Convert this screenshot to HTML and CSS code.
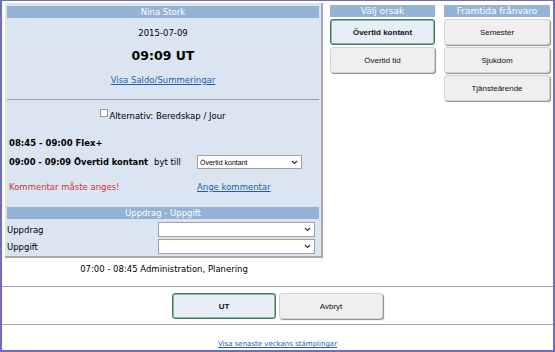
FILE: index.html
```html
<!DOCTYPE html>
<html lang="sv">
<head>
    <meta charset="UTF-8">
    <title>Stämpling</title>
    <link rel="stylesheet" href="styles.css">
</head>
<body>
    <div class="page">
        <div class="top">
            <div class="panel">
                <div class="bar">Nina Stork</div>
                <div class="date">2015-07-09</div>
                <div class="time">09:09 UT</div>
                <div class="saldo"><a href="#">Visa Saldo/Summeringar</a></div>
                <div class="divider"></div>
                <div class="alt"><input type="checkbox" class="check">Alternativ: Beredskap / Jour</div>
                <div class="period">08:45 - 09:00 Flex+</div>
                <div class="swap">
                    <span class="period-text">09:00 - 09:09 Övertid kontant</span>
                    <span>byt till</span>
                    <span class="select-wrap">
                        <select class="pick"><option>Övertid kontant</option></select>
                        <svg class="arrow" width="7" height="5" viewBox="0 0 7 5"><path d="M1 1l2.5 2.5L6 1" fill="none" stroke="#333" stroke-width="1.1"/></svg>
                    </span>
                </div>
                <div class="swap comment">
                    <span class="warn">Kommentar måste anges!</span>
                    <span></span>
                    <a href="#">Ange kommentar</a>
                </div>
                <div class="bar sub">Uppdrag - Uppgift</div>
                <div class="field">
                    <label>Uppdrag</label>
                    <span class="select-wrap">
                        <select class="pick wide"><option></option></select>
                        <svg class="arrow" width="7" height="5" viewBox="0 0 7 5"><path d="M1 1l2.5 2.5L6 1" fill="none" stroke="#333" stroke-width="1.1"/></svg>
                    </span>
                </div>
                <div class="field">
                    <label>Uppgift</label>
                    <span class="select-wrap">
                        <select class="pick wide"><option></option></select>
                        <svg class="arrow" width="7" height="5" viewBox="0 0 7 5"><path d="M1 1l2.5 2.5L6 1" fill="none" stroke="#333" stroke-width="1.1"/></svg>
                    </span>
                </div>
            </div>

            <!-- Reasons -->
            <div class="column reasons">
                <div class="col-head">Välj orsak</div>
                <button class="btn selected">Övertid kontant</button>
                <button class="btn">Övertid tid</button>
            </div>

            <!-- Future absence -->
            <div class="column future">
                <div class="col-head">Framtida frånvaro</div>
                <button class="btn">Semester</button>
                <button class="btn">Sjukdom</button>
                <button class="btn">Tjänsteärende</button>
            </div>
        </div>

        <div class="summary">07:00 - 08:45 Administration, Planering</div>
        <div class="rule"></div>
        <div class="actions">
            <button class="btn big selected">UT</button>
            <button class="btn big">Avbryt</button>
        </div>
        <div class="rule second"></div>
        <div class="footer"><a href="#">Visa senaste veckans stämplingar</a></div>
    </div>
</body>
</html>
```

FILE: styles.css
```css
body {
    margin: 0;
    font-family: "DejaVu Sans", Verdana, sans-serif;
    font-size: 8.5px;
    color: #000;
    background-color: #fff;
}

a {
    color: #1f5db3;
    text-decoration: underline;
}

.page {
    box-sizing: border-box;
    width: 555px;
    height: 352px;
    border: 2px solid #6d6dc8;
    border-top-width: 1px;
    display: flex;
    flex-direction: column;
}

/* Top area */
.top {
    display: flex;
    align-items: flex-start;
    padding: 2px 0 0 3px;
}

.panel {
    width: 312px;
    padding: 3px 2px 2px;
    background-color: #dbe5f1;
    border-right: 2px solid #a9a9a9;
    border-bottom: 2px solid #a9a9a9;
}

.bar,
.col-head {
    height: 12px;
    line-height: 12px;
    background-color: #95b3d7;
    color: #fff;
    text-align: center;
}

.date {
    margin-top: 9px;
    line-height: 12px;
    text-align: center;
}

.time {
    margin-top: 9px;
    line-height: 16px;
    font-size: 12.5px;
    font-weight: bold;
    text-align: center;
}

.saldo {
    margin-top: 10px;
    line-height: 12px;
    text-align: center;
}

.divider {
    margin-top: 13px;
    border-top: 1px solid #9c9c9c;
}

.alt {
    margin-top: 9px;
    height: 12px;
    line-height: 12px;
    text-align: center;
}

.check {
    appearance: none;
    box-sizing: border-box;
    width: 8px;
    height: 8px;
    margin: 0 1px 0 0;
    border: 1px solid #999;
    background-color: #fff;
    vertical-align: 2px;
}

.period {
    margin-top: 16px;
    padding-left: 2px;
    line-height: 12px;
    font-weight: bold;
}

.swap {
    margin-top: 5px;
    padding-left: 2px;
    height: 16px;
    display: grid;
    grid-template-columns: 145px 43px 105px;
    align-items: center;
}

.period-text {
    font-weight: bold;
    font-size: 8.3px;
}

.comment {
    margin-top: 11px;
    height: 12px;
}

.warn {
    color: #cc3535;
}

/* Select boxes */
.select-wrap {
    position: relative;
    display: block;
    height: 14px;
}

.pick {
    appearance: none;
    box-sizing: border-box;
    display: block;
    width: 105px;
    height: 14px;
    margin: 0;
    padding: 0 2px;
    font-family: "Liberation Sans", Arial, sans-serif;
    font-size: 7px;
    color: #000;
    background-color: #fff;
    border: 1px solid #a0a0a0;
    border-radius: 0;
}

.arrow {
    position: absolute;
    right: 4px;
    top: 5px;
}

.bar.sub {
    margin-top: 14px;
}

.field {
    margin-top: 3px;
    height: 15px;
    display: grid;
    grid-template-columns: 151px 157px;
    align-items: center;
}

.field + .field {
    margin-top: 2px;
}

.field .select-wrap {
    height: 15px;
}

.pick.wide {
    width: 157px;
    height: 15px;
}

/* Right columns */
.column {
    margin-top: 2px;
    display: flex;
    flex-direction: column;
}

.reasons {
    width: 105px;
    margin-left: 7px;
}

.future {
    width: 106px;
    margin-left: 9px;
}

.col-head {
    font-size: 9px;
}

.btn {
    box-sizing: border-box;
    height: 26px;
    margin-top: 2px;
    padding: 0;
    font-family: "Liberation Sans", Arial, sans-serif;
    font-size: 8px;
    color: #111;
    background-color: #efefef;
    border: 1px solid #d2d2d2;
    border-radius: 3px;
    box-shadow: 1px 1px 1px #8d8d8d;
}

.btn.selected {
    font-weight: bold;
    background-color: #e7eef8;
    border: 1px solid #3c7b5d;
    box-shadow: inset 0 0 0 0.5px #3c7b5d;
}

/* Bottom area */
.summary {
    width: 318px;
    margin: 5px 0 0 3px;
    line-height: 12px;
    text-align: center;
}

.rule {
    margin-top: 11px;
    border-top: 1px solid #a3a3a3;
}

.actions {
    display: flex;
    justify-content: center;
    gap: 3px;
    padding-top: 6px;
}

.btn.big {
    width: 104px;
    margin-top: 0;
}

.rule.second {
    margin-top: 5px;
}

.footer {
    margin-top: 13px;
    line-height: 12px;
    font-size: 7px;
    text-align: center;
}
```
